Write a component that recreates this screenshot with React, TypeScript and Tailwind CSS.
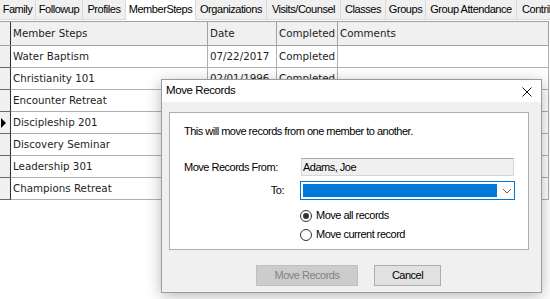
import React from 'react';

const tabs = [
  { label: 'Family', w: 'w-[36px]' },
  { label: 'Followup', w: 'w-[47px]' },
  { label: 'Profiles', w: 'w-[43px]' },
  { label: 'MemberSteps', w: 'w-[70px]', active: true },
  { label: 'Organizations', w: 'w-[71px]' },
  { label: 'Visits/Counsel', w: 'w-[74px]' },
  { label: 'Classes', w: 'w-[45px]' },
  { label: 'Groups', w: 'w-[40px]' },
  { label: 'Group Attendance', w: 'w-[91px]' },
  { label: 'Contributions', w: 'flex-1' },
];

const rows = [
  { step: 'Water Baptism', date: '07/22/2017', done: 'Completed' },
  { step: 'Christianity 101', date: '02/01/1996', done: 'Completed' },
  { step: 'Encounter Retreat', date: '', done: '' },
  { step: 'Discipleship 201', date: '', done: '', current: true },
  { step: 'Discovery Seminar', date: '', done: '' },
  { step: 'Leadership 301', date: '', done: '' },
  { step: 'Champions Retreat', date: '', done: '' },
];

// Windows style radio button
const Radio: React.FC<{ checked?: boolean; label: string }> = ({ checked, label }) => (
  <div className="flex items-center h-[13px]">
    <div className="w-[12px] h-[12px] rounded-full border border-[#333333] bg-white flex items-center justify-center">
      {checked && <div className="w-[6px] h-[6px] rounded-full bg-[#333333]" />}
    </div>
    <span className="ml-[4px]">{label}</span>
  </div>
);

export default function App() {
  return (
    <div className="relative w-[550px] h-[299px] bg-white overflow-hidden">
      {/* tab strip */}
      <div className="flex h-[20px] bg-[#f0f0f0] font-['Liberation_Sans',Arial,sans-serif] text-[11px] tracking-[-0.45px] text-black">
        {tabs.map((t) => (
          <div
            key={t.label}
            className={`${t.w} flex items-center justify-center overflow-hidden whitespace-nowrap border-r border-[#d9d9d9] ${
              t.active ? 'bg-white pb-[2px]' : 'border-b'
            } ${t.label === 'Contributions' ? 'justify-start pl-[5px] border-r-0' : ''}`}
          >
            {t.label}
          </div>
        ))}
      </div>

      {/* grid */}
      <div className="mt-[1px] border-t border-[#a0a0a0] w-[549px] font-['DejaVu_Sans',Verdana,sans-serif] text-[10.3px] text-[#1e1e1e]">
        <div className="flex h-[24px] bg-[#f0f0f0] border-b border-[#a0a0a0]">
          <div className="w-[11px] border-r border-[#303030]" />
          <div className="w-[197px] border-r border-[#a0a0a0] pl-[2px] flex items-center">Member Steps</div>
          <div className="w-[69px] border-r border-[#a0a0a0] pl-[2px] flex items-center">Date</div>
          <div className="w-[61px] border-r border-[#a0a0a0] pl-[2px] flex items-center">Completed</div>
          <div className="w-[211px] border-r border-[#a0a0a0] pl-[2px] flex items-center">Comments</div>
        </div>
        {rows.map((r) => (
          <div key={r.step} className="flex h-[22px]">
            <div className="w-[11px] bg-[#f0f0f0] border-r border-b border-r-[#303030] border-b-[#6a6a6a] flex items-center">
              {r.current && (
                <div className="ml-[1px] w-0 h-0 border-y-[5px] border-y-transparent border-l-[5px] border-l-black" />
              )}
            </div>
            <div className="w-[197px] border-r border-b border-[#b0b0b0] pl-[2px] flex items-center">{r.step}</div>
            <div className="w-[69px] border-r border-b border-[#b0b0b0] pl-[2px] flex items-center">{r.date}</div>
            <div className="w-[61px] border-r border-b border-[#b0b0b0] pl-[2px] flex items-center">{r.done}</div>
            <div className="w-[211px] border-r border-b border-[#b0b0b0]" />
          </div>
        ))}
      </div>

      {/* Move Records dialog */}
      <div className="absolute left-[161px] top-[79px] w-[381px] h-[214px] flex flex-col border border-[#9a9a9a] bg-[#f0f0f0] shadow-[0_3px_14px_rgba(0,0,0,0.28)] font-['Liberation_Sans',Arial,sans-serif] text-[11px] tracking-[-0.5px] text-black">
        <div className="h-[22px] bg-white flex items-center justify-between pl-[4px] pr-[9px]">
          <span className="text-[11.5px] tracking-[-0.4px]">Move Records</span>
          <svg width="10" height="10" viewBox="0 0 10 10" className="mt-[1px]">
            <path d="M0.5 0.5 L9.5 9.5 M9.5 0.5 L0.5 9.5" stroke="#111" strokeWidth="1" />
          </svg>
        </div>

        <div className="ml-[7px] mt-[10px] w-[360px] h-[138px] bg-white border border-[#adadad] pl-[14px] pt-[12px]">
          <div className="h-[13px] leading-[13px]">This will move records from one member to another.</div>

          <div className="mt-[20px] flex items-center h-[18px]">
            <div className="w-[116px]">Move Records From:</div>
            <div className="ml-[1px] w-[213px] h-[18px] bg-[#f0f0f0] border border-[#d6d6d6] border-t-[#a9a9a9] flex items-center pl-[1px]">
              Adams, Joe
            </div>
          </div>

          <div className="mt-[5px] flex items-center h-[19px]">
            <div className="w-[116px] text-right pr-[16px]">To:</div>
            <div className="w-[215px] h-[19px] border border-[#0078d7] bg-white flex items-center px-[2px]">
              <div className="w-[194px] h-[13px] bg-[#0078d7]" />
              <svg width="10" height="6" viewBox="0 0 10 6" className="ml-[5px]">
                <path d="M1 1 L5 5 L9 1" fill="none" stroke="#606060" strokeWidth="1" />
              </svg>
            </div>
          </div>

          <div className="ml-[116px] mt-[9px] flex flex-col gap-[6px]">
            <Radio checked label="Move all records" />
            <Radio label="Move current record" />
          </div>
        </div>

        <div className="mt-[15px] ml-[94px] flex gap-[16px]">
          <div className="w-[102px] h-[21px] bg-[#cccccc] border border-[#bfbfbf] text-[#838383] flex items-center justify-center">
            Move Records
          </div>
          <div className="w-[67px] h-[21px] bg-[#e1e1e1] border border-[#adadad] flex items-center justify-center">
            Cancel
          </div>
        </div>
      </div>
    </div>
  );
}
